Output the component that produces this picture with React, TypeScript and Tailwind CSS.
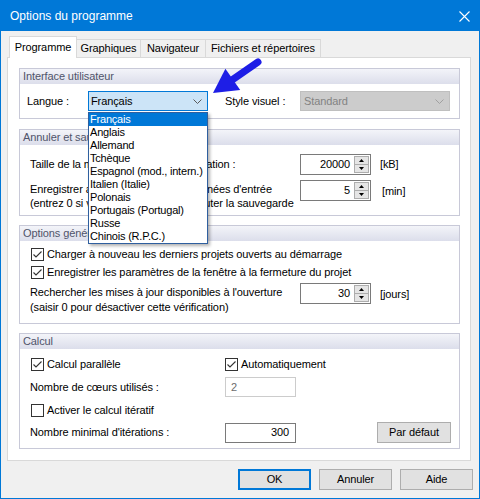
import React from 'react';

const languages = [
  'Français',
  'Anglais',
  'Allemand',
  'Tchèque',
  'Espagnol (mod., intern.)',
  'Italien (Italie)',
  'Polonais',
  'Portugais (Portugal)',
  'Russe',
  'Chinois (R.P.C.)',
];

function CheckBox({ checked }: { checked?: boolean }) {
  return (
    <span className="flex h-[13px] w-[13px] shrink-0 items-center justify-center border border-[#333333] bg-white">
      {checked && (
        <svg width="11" height="11" viewBox="0 0 11 11">
          <path d="M1.5 5.5 L4 8 L9.5 2.5" fill="none" stroke="#333333" strokeWidth="1.1" />
        </svg>
      )}
    </span>
  );
}

function Spin({ value }: { value: string }) {
  return (
    <div className="flex h-[21px] w-[71px] shrink-0 items-center border border-[#7a7a7a] bg-white">
      <span className="flex-1 pr-[4px] text-right">{value}</span>
      <div className="flex h-full w-[16px] flex-col py-[1px] pr-[1px]">
        <span className="flex flex-1 items-center justify-center border border-[#adadad] bg-[#e5e5e5]">
          <svg width="5" height="3" viewBox="0 0 5 3">
            <path d="M0 3 L2.5 0 L5 3 Z" fill="#000" />
          </svg>
        </span>
        <span className="flex flex-1 items-center justify-center border border-t-0 border-[#adadad] bg-[#e5e5e5]">
          <svg width="5" height="3" viewBox="0 0 5 3">
            <path d="M0 0 L2.5 3 L5 0 Z" fill="#000" />
          </svg>
        </span>
      </div>
    </div>
  );
}

function Group({
  title,
  className,
  children,
}: {
  title: string;
  className?: string;
  children: React.ReactNode;
}) {
  return (
    <div className={`border border-[#c8c9d8] ${className ?? ''}`}>
      <div className="h-[15px] bg-linear-to-b from-[#f3f4f9] to-[#dcdeeb] pl-[3px] leading-[15px] text-[#50546a]">
        {title}
      </div>
      {children}
    </div>
  );
}

function Chevron({ color }: { color: string }) {
  return (
    <svg width="9" height="5" viewBox="0 0 9 5">
      <path d="M0.5 0.5 L4.5 4.5 L8.5 0.5" fill="none" stroke={color} strokeWidth="1" />
    </svg>
  );
}

export default function App() {
  return (
    <div className="relative flex h-[499px] w-[480px] flex-col border border-[#0078d7] bg-[#f0f0f0] font-['Liberation_Sans',Arial,sans-serif] text-[11px] tracking-[-0.1px] text-black">
      {/* title bar */}
      <div className="flex h-[30px] shrink-0 items-center justify-between bg-[#0078d7] pl-[9px] pr-[9px] text-[12px] tracking-normal text-white">
        <span>Options du programme</span>
        <svg width="11" height="11" viewBox="0 0 11 11">
          <path d="M0.5 0.5 L10.5 10.5 M10.5 0.5 L0.5 10.5" stroke="#ffffff" strokeWidth="1.1" />
        </svg>
      </div>

      {/* tabs */}
      <div className="mt-[5px] flex h-[21px] items-end pl-[8px]">
        <div className="relative z-10 -mb-[1px] flex h-[22px] w-[68px] items-center justify-center border border-b-0 border-[#d9d9d9] bg-white pb-[1px]">
          Programme
        </div>
        <div className="flex h-[18px] w-[64px] items-center justify-center border-t border-r border-[#d9d9d9]">
          Graphiques
        </div>
        <div className="flex h-[18px] w-[65px] items-center justify-center border-t border-r border-[#d9d9d9]">
          Navigateur
        </div>
        <div className="flex h-[18px] w-[115px] items-center justify-center border-t border-r border-[#d9d9d9]">
          Fichiers et répertoires
        </div>
      </div>

      {/* panel */}
      <div className="ml-[6px] flex h-[404px] w-[464px] flex-col border border-[#d9d9d9] bg-white pl-[11px] pr-[10px] pt-[10px]">
        <Group title="Interface utilisateur">
          <div className="mb-[7px] mt-[7px] flex h-[20px] items-center pl-[7px]">
            <span className="w-[61px]">Langue :</span>
            <div className="relative w-[120px]">
              <div className="flex h-[20px] items-center justify-between border border-[#0078d7] bg-[#cce4f7] pl-[2px] pr-[5px]">
                <span>Français</span>
                <Chevron color="#5a5a5a" />
              </div>
              <div className="absolute left-0 top-[21px] z-20 w-[120px] border border-[#2f5f9f] bg-white shadow-[2px_2px_3px_rgba(0,0,0,0.3)]">
                {languages.map((lang, index) => (
                  <div
                    key={index}
                    className={`h-[13px] overflow-hidden whitespace-nowrap pl-[1px] leading-[13px] tracking-[-0.2px] ${
                      index === 0 ? 'bg-[#0078d7] text-white' : ''
                    }`}
                  >
                    {lang}
                  </div>
                ))}
              </div>
            </div>
            <span className="ml-[17px] w-[75px]">Style visuel :</span>
            <div className="flex h-[20px] w-[150px] items-center justify-between border border-[#bfbfbf] bg-[#cccccc] pl-[3px] pr-[5px] text-[#838383]">
              <span>Standard</span>
              <Chevron color="#a0a0a0" />
            </div>
          </div>
        </Group>

        <Group title="Annuler et sauvegarde" className="mt-[10px]">
          <div className="mt-[9px] flex items-center pl-[10px]">
            <span className="w-[270px]">Taille de la mémoire allouée à l'annulation :</span>
            <Spin value="20000" />
            <span className="ml-[9px]">[kB]</span>
          </div>
          <div className="mb-[5px] mt-[5px] flex items-start pl-[10px]">
            <span className="w-[270px] pt-[2px] leading-[14px]">
              Enregistrer automatiquement les données d'entrée
              <br />
              (entrez 0 si vous ne voulez pas exécuter la sauvegarde
            </span>
            <Spin value="5" />
            <span className="ml-[11px] pt-[3px]">[min]</span>
          </div>
        </Group>

        <Group title="Options générales" className="mt-[9px]">
          <div className="mt-[6px] flex h-[14px] items-center gap-[3px] pl-[11px]">
            <CheckBox checked />
            <span>Charger à nouveau les derniers projets ouverts au démarrage</span>
          </div>
          <div className="mt-[4px] flex h-[14px] items-center gap-[3px] pl-[11px]">
            <CheckBox checked />
            <span>Enregistrer les paramètres de la fenêtre à la fermeture du projet</span>
          </div>
          <div className="mb-[8px] mt-[4px] flex items-start pl-[10px]">
            <span className="w-[270px] pt-[2px] leading-[15px]">
              Rechercher les mises à jour disponibles à l'ouverture
              <br />
              (saisir 0 pour désactiver cette vérification)
            </span>
            <Spin value="30" />
            <span className="ml-[9px] pt-[3px]">[jours]</span>
          </div>
        </Group>

        <Group title="Calcul" className="mt-[9px]">
          <div className="mt-[9px] flex h-[13px] items-center pl-[11px]">
            <div className="flex w-[194px] items-center gap-[3px]">
              <CheckBox checked />
              <span>Calcul parallèle</span>
            </div>
            <div className="flex items-center gap-[3px]">
              <CheckBox checked />
              <span>Automatiquement</span>
            </div>
          </div>
          <div className="mt-[6px] flex h-[20px] items-center pl-[10px]">
            <span className="w-[195px]">Nombre de cœurs utilisés :</span>
            <div className="flex h-[20px] w-[71px] items-center border border-[#cccccc] pl-[5px] text-[#6d6d6d]">
              2
            </div>
          </div>
          <div className="mt-[7px] flex h-[13px] items-center gap-[3px] pl-[11px]">
            <CheckBox />
            <span>Activer le calcul itératif</span>
          </div>
          <div className="mb-[5px] mt-[5px] flex h-[21px] items-center pl-[10px]">
            <span className="w-[195px]">Nombre minimal d'itérations :</span>
            <div className="flex h-[20px] w-[71px] items-center justify-end border border-[#7a7a7a] pr-[6px]">
              300
            </div>
            <button className="ml-[81px] h-[21px] w-[74px] border border-[#adadad] bg-[#e1e1e1]">
              Par défaut
            </button>
          </div>
        </Group>
      </div>

      {/* bottom buttons */}
      <div className="mt-[8px] flex justify-end gap-[8px] pr-[6px]">
        <button className="h-[21px] w-[73px] border-2 border-[#0078d7] bg-[#e1e1e1]">OK</button>
        <button className="h-[21px] w-[73px] border border-[#adadad] bg-[#e1e1e1]">Annuler</button>
        <button className="h-[21px] w-[73px] border border-[#adadad] bg-[#e1e1e1]">Aide</button>
      </div>

      {/* annotation arrow */}
      <svg
        className="pointer-events-none absolute left-[199px] top-[54px] z-30"
        width="70"
        height="45"
        viewBox="200 55 70 45"
      >
        <path d="M258 62 L232 80" stroke="#1e1ee6" strokeWidth="7" strokeLinecap="round" />
        <path d="M213 93 L225.4 68.7 L240.2 90.1 Z" fill="#1e1ee6" />
      </svg>
    </div>
  );
}
